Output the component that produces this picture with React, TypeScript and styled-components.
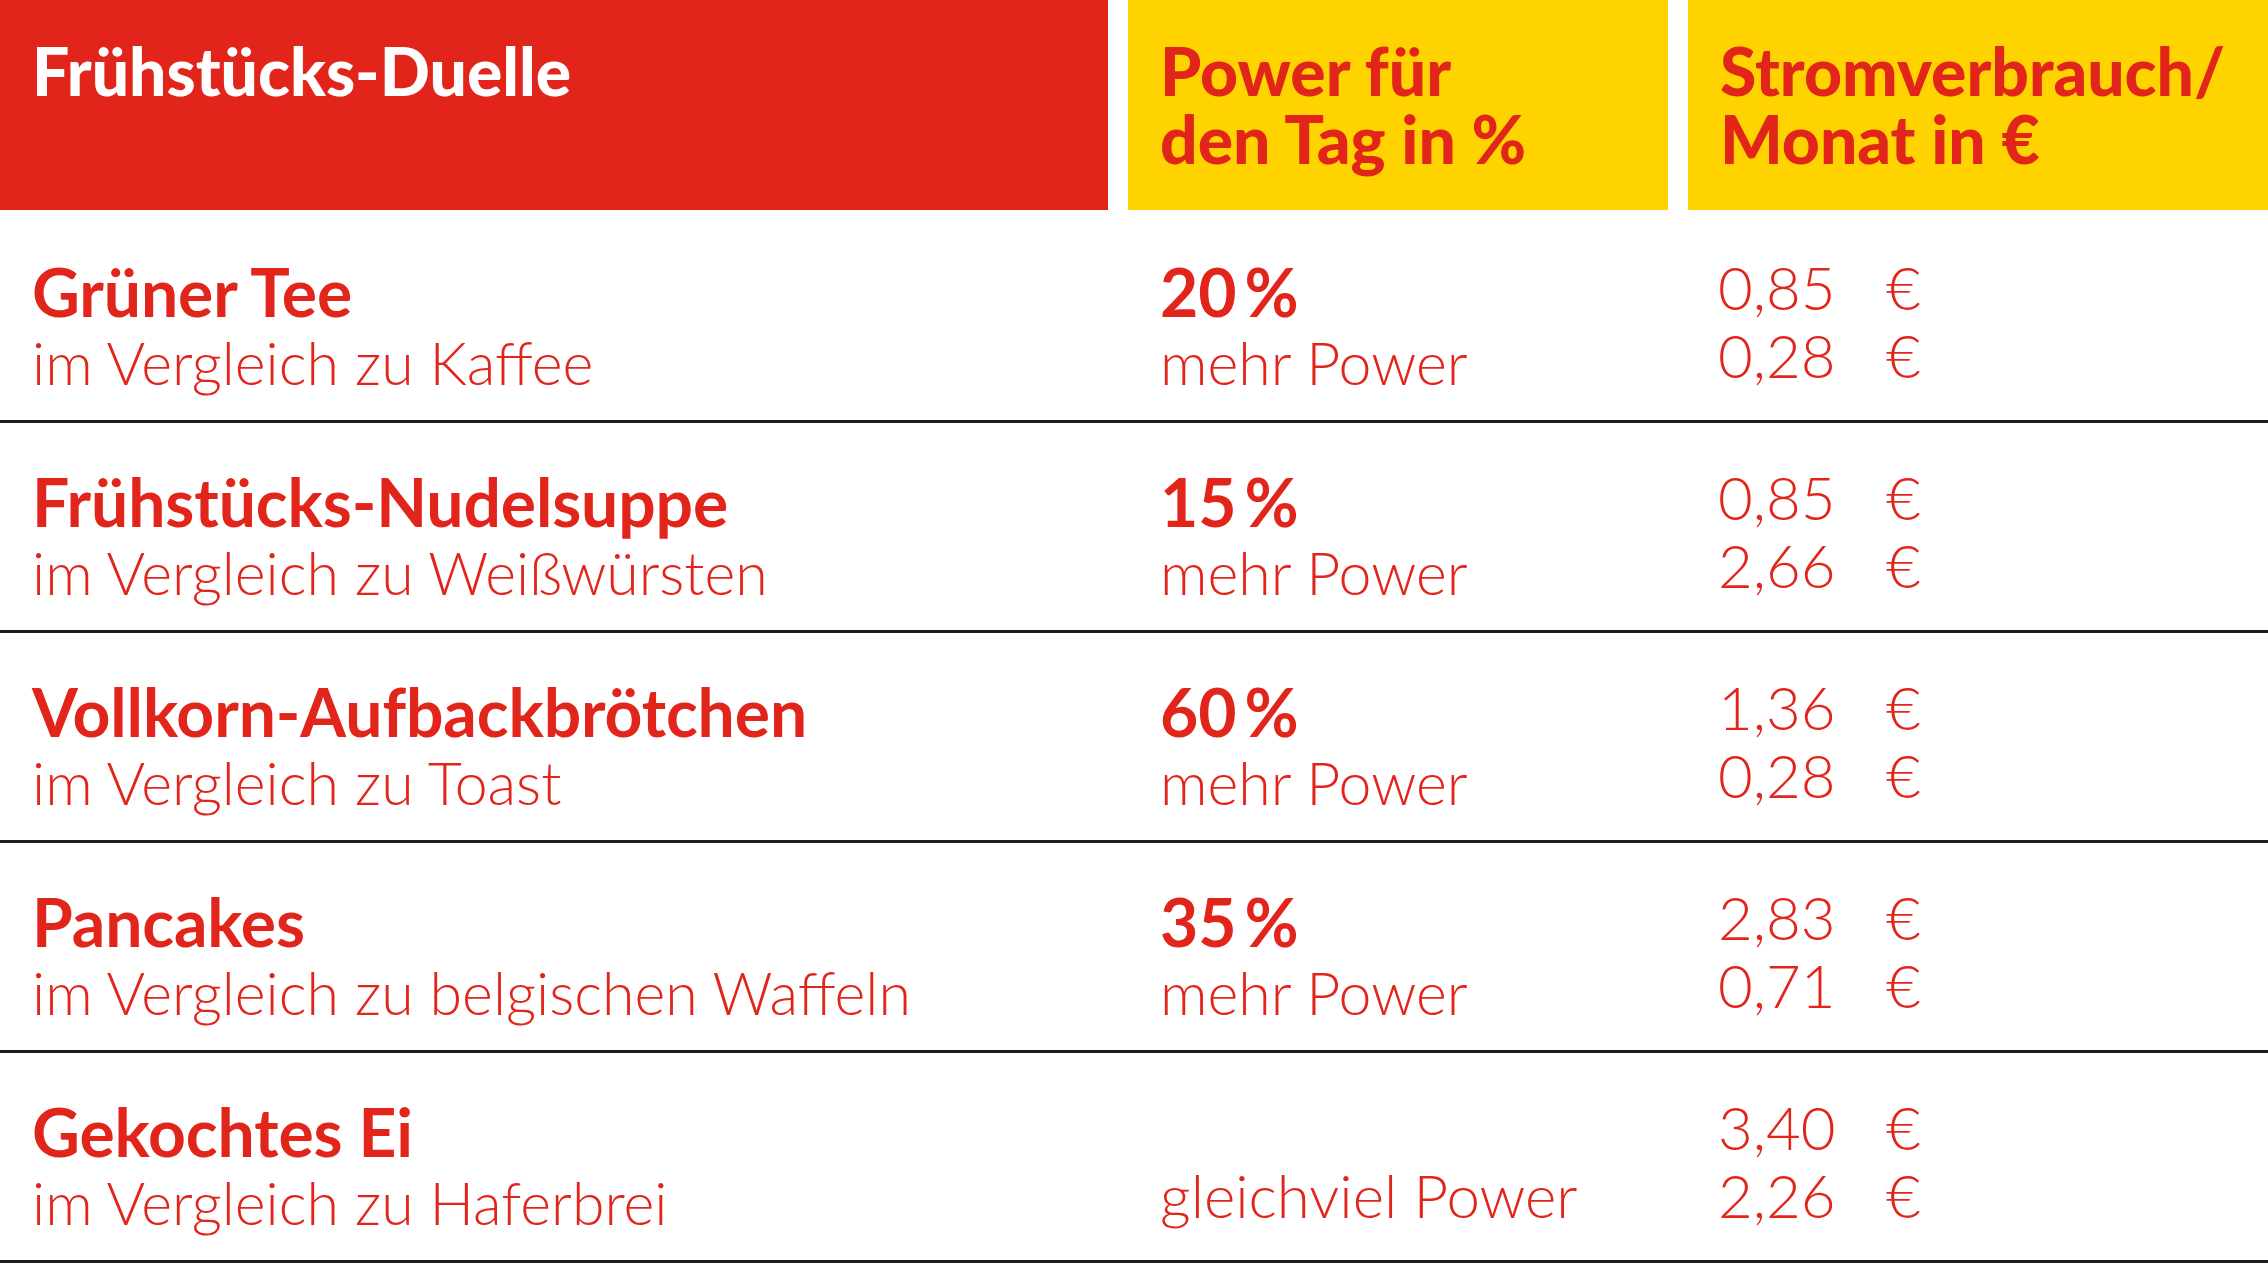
import React from "react";
import styled, { createGlobalStyle } from "styled-components";

const RED = "#e2251b";
const YELLOW = "#ffd300";

const GlobalStyle = createGlobalStyle`
  html, body {
    margin: 0;
    padding: 0;
    background: #ffffff;
  }
  body {
    font-family: Lato, "Open Sans", "Liberation Sans", sans-serif;
    -webkit-font-smoothing: antialiased;
  }
`;

type Row = {
  title: string;
  compare: string;
  power?: string;
  powerNote: string;
  costs: [string, string];
  lowNote?: boolean;
};

const rows: Row[] = [
  { title: "Grüner Tee", compare: "im Vergleich zu Kaffee", power: "20\u2009%", powerNote: "mehr Power", costs: ["0,85", "0,28"] },
  { title: "Frühstücks-Nudelsuppe", compare: "im Vergleich zu Weißwürsten", power: "15\u2009%", powerNote: "mehr Power", costs: ["0,85", "2,66"] },
  { title: "Vollkorn-Aufbackbrötchen", compare: "im Vergleich zu Toast", power: "60\u2009%", powerNote: "mehr Power", costs: ["1,36", "0,28"] },
  { title: "Pancakes", compare: "im Vergleich zu belgischen Waffeln", power: "35\u2009%", powerNote: "mehr Power", costs: ["2,83", "0,71"] },
  { title: "Gekochtes Ei", compare: "im Vergleich zu Haferbrei", powerNote: "gleichviel Power", costs: ["3,40", "2,26"], lowNote: true },
];

const headers: { tone: "red" | "yellow"; lines: string[] }[] = [
  { tone: "red", lines: ["Frühstücks-Duelle"] },
  { tone: "yellow", lines: ["Power für", "den Tag in %"] },
  { tone: "yellow", lines: ["Stromverbrauch/", "Monat in €"] },
];

const App = () => {
  return (
    <>
      <GlobalStyle />
      <Table>
        <HeadRow>
          {headers.map((h) => (
            <HeadCell key={h.lines[0]} $tone={h.tone}>
              {h.lines.map((l) => (
                <HeadLine key={l}>{l}</HeadLine>
              ))}
            </HeadCell>
          ))}
        </HeadRow>
        {rows.map((row) => (
          <BodyRow key={row.title}>
            <Cell>
              <Title>{row.title}</Title>
              <Sub>{row.compare}</Sub>
            </Cell>
            <Cell $shift={row.lowNote}>
              {row.power ? <Title>{row.power}</Title> : <Spacer />}
              {row.lowNote ? <Line>{row.powerNote}</Line> : <Sub>{row.powerNote}</Sub>}
            </Cell>
            <Cell $shift $money>
              {row.costs.map((c, i) => (
                <Line key={i}>
                  <Amount>{c}</Amount>€
                </Line>
              ))}
            </Cell>
          </BodyRow>
        ))}
      </Table>
    </>
  );
};

export default App;

const Table = styled.div`
  width: 2268px;
  display: flex;
  flex-direction: column;
`;

const HeadRow = styled.div`
  display: grid;
  grid-template-columns: 1108px 540px 1fr;
  column-gap: 20px;
  height: 210px;
  margin-bottom: 3px;
`;

const HeadCell = styled.div<{ $tone: "red" | "yellow" }>`
  display: flex;
  flex-direction: column;
  background: ${({ $tone }) => ($tone === "red" ? RED : YELLOW)};
  color: ${({ $tone }) => ($tone === "red" ? "#ffffff" : RED)};
  padding: 37px 0 0 32px;
  box-sizing: border-box;
`;

const HeadLine = styled.div`
  font-weight: 900;
  font-size: 66px;
  line-height: 68px;
  white-space: nowrap;
`;

const BodyRow = styled.div`
  display: grid;
  grid-template-columns: 1108px 540px 1fr;
  column-gap: 20px;
  height: 210px;
  box-sizing: border-box;
  border-bottom: 3px solid #1d1d1b;
`;

const Cell = styled.div<{ $shift?: boolean; $money?: boolean }>`
  display: flex;
  flex-direction: column;
  padding: ${({ $shift }) => ($shift ? "40px" : "43px")} 0 0
    ${({ $money }) => ($money ? "30px" : "32px")};
  color: ${RED};
`;

const Title = styled.div`
  font-weight: 700;
  font-size: 66px;
  line-height: 72px;
  white-space: nowrap;
  letter-spacing: -0.1px;
`;

const Sub = styled.div`
  font-weight: 300;
  font-size: 59px;
  line-height: 70px;
  white-space: nowrap;
`;

const Line = styled.div`
  font-weight: 300;
  font-size: 60px;
  line-height: 68px;
  white-space: nowrap;
`;

const Spacer = styled.div`
  height: 68px;
`;

const Amount = styled.span`
  display: inline-block;
  width: 168px;
`;
